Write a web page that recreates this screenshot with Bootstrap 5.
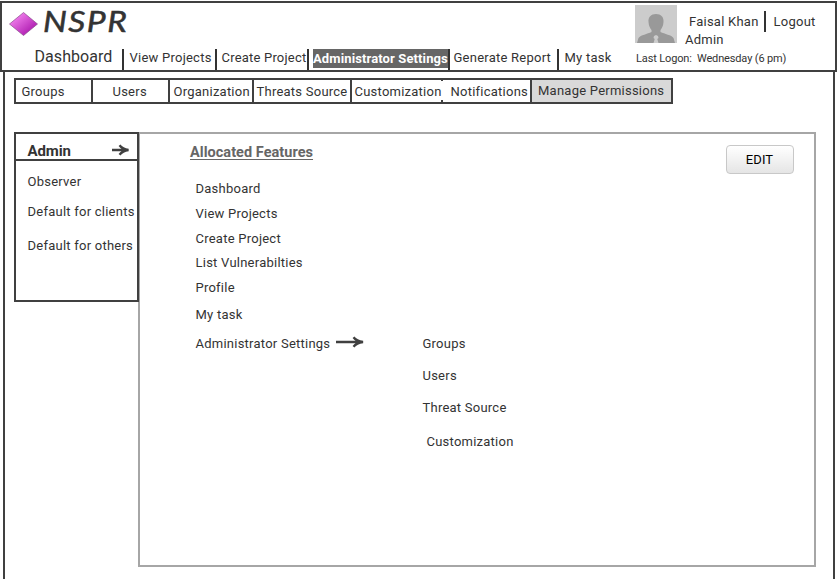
<!DOCTYPE html>
<html lang="en">
<head>
<meta charset="utf-8">
<meta name="viewport" content="width=device-width, initial-scale=1">
<title>NSPR - Manage Permissions</title>
<link href="https://cdn.jsdelivr.net/npm/bootstrap@5.3.0/dist/css/bootstrap.min.css" rel="stylesheet">
<style>
body{font:13px/20px Roboto,"Liberation Sans",sans-serif;letter-spacing:.24px;color:#333;background:#fff;height:579px;overflow:hidden;padding-top:1px}
a{color:inherit;text-decoration:none;white-space:nowrap}
.topbar{height:71px;border:2px solid #404040}
.brand{padding:8px 0 0 7px;height:40px}
.brand-name{font:italic 400 28px/28px Lato,sans-serif;letter-spacing:1.2px;margin-left:4px;margin-top:-4px;-webkit-text-stroke:.5px #333;transform:scaleX(1.2);transform-origin:0 0}
.mainnav{height:26px;padding-left:32.5px}
.mainnav>*{flex:none;white-space:nowrap}
.first{width:87.5px;font-size:16px;letter-spacing:.06px;margin-top:4px}
.item{border-left:2px solid #333;height:21px;padding-left:5.5px;line-height:17px;margin-top:6px}
.item.tight{padding-left:4.5px;letter-spacing:.2px}
.current{border-left:2px solid #333;padding-left:4px;width:141px;height:21px;margin-top:6px}
.current a{display:block;background:#666;color:#fff;font-weight:700;letter-spacing:.12px;line-height:19px;height:19px}
.who{width:200px;padding-top:2px}
.who-info{margin-left:8px}
.logout{border-left:2px solid #333;height:21px;margin:6px 0 0 5px;padding-left:8px;line-height:21px}
.logon{font-size:11px;letter-spacing:-.14px;margin:-1px 0 0 1px;white-space:pre}
.frame{margin:0 2px 0 3px;height:507px;border:solid #404040;border-width:0 2px;padding:6px 17px 0 9px}
.tabs{width:659px;height:26px;border:2px solid #404040}
.tabs>*{flex:none;height:22px;line-height:23.5px}
.tabs>*+*{border-left:2px solid #404040}
.tabs .gap-line{border-left:0;background:linear-gradient(#404040 1px,transparent 1px 20px,#404040 20px) 0 0/2px 100% no-repeat}
.tabs .on{background:#d9d9d9;line-height:21.5px}
.work{margin-top:28px}
.side{width:125px;height:170px;border:2px solid #404040;flex:none;z-index:1}
.side-head{height:27px;border-bottom:2px solid #404040;padding:7px 7px 0 11.5px;font-size:15px;line-height:20px;font-weight:700;letter-spacing:-.1px}
.side a:not(.side-head){display:block;padding-left:11.5px}
.panel{width:678px;height:435px;border:2px solid #a6a6a6;margin-left:-1px;flex:none}
.panel h1{font-size:14.5px;line-height:20px;font-weight:700;color:#666;text-decoration:underline;text-underline-offset:2px;margin:9px 0 0 50px;letter-spacing:.04px}
.feat{padding-left:55.5px;width:282.5px}
.feat div,.sub div{height:20px;white-space:nowrap}
.edit{width:68px;height:29px;margin:11px 20px 0 0;border:1px solid #c8c8c8;border-radius:4px;background:linear-gradient(#fff,#e5e5e5);font-size:13px;line-height:20px;padding:3px 1px 3px 0;color:#000;letter-spacing:.1px}
</style>
</head>
<body>
<header class="topbar d-flex justify-content-between">
  <div>
    <div class="brand d-flex align-items-start">
      <svg width="30" height="26" viewBox="0 0 30 26"><defs><linearGradient id="g" x1="0" y1="0" x2="1" y2="1"><stop offset=".2" stop-color="#ef7bea"/><stop offset=".8" stop-color="#b01fb2"/></linearGradient></defs><path d="M.5 13 14.500 1.500 28.500 13 14.500 24.500Z" fill="url(#g)" stroke="#8a4a8c" stroke-width=".7"/></svg>
      <span class="brand-name">NSPR</span>
    </div>
    <nav class="mainnav d-flex">
      <a href="#" class="first">Dashboard</a>
      <a href="#" class="item" style="width:93px">View Projects</a>
      <a href="#" class="item tight" style="width:92px">Create Project</a>
      <div class="current"><a href="#">Administrator Settings</a></div>
      <a href="#" class="item" style="width:109px;padding-left:3.5px">Generate Report</a>
      <a href="#" class="item">My task</a>
    </nav>
  </div>
  <div class="who">
    <div class="d-flex">
      <svg width="42" height="38" viewBox="0 0 42 38"><path fill="#ccc" d="M0 0h42v38H0z"/><path fill="#999" d="M21 9c5 0 8 3 7.500 8-.3 4-1.500 6-3 8v2c4 2 11 3 13 6l1.500 5H2l1.500-5c2-3 9-4 13-6v-2c-1.500-2-2.700-4-3-8C13 12 16 9 21 9z"/><path fill="#ccc" d="m19 31 2-1 2 1 .5 2-1.200 1 1.200 4h-5l1.200-4-1.200-1z"/></svg>
      <div class="who-info"><div class="ps-1" style="padding-top:7px">Faisal Khan</div><div style="margin-top:-2px">Admin</div></div>
      <a href="#" class="logout">Logout</a>
    </div>
    <div class="logon">Last Logon:  Wednesday (6 pm)</div>
  </div>
</header>
<main class="frame">
  <nav class="tabs d-flex">
    <a href="#" style="width:75px;padding-left:5.5px">Groups</a>
    <a href="#" style="width:77px;padding-left:19.5px">Users</a>
    <a href="#" style="width:84px;padding-left:3.5px">Organization</a>
    <a href="#" style="width:98px;padding-left:2.5px">Threats Source</a>
    <a href="#" style="width:91px;padding-left:2.5px">Customization</a>
    <a href="#" class="gap-line" style="width:89px;padding-left:9.5px">Notifications</a>
    <a href="#" class="on" style="width:141px;padding-left:6px">Manage Permissions</a>
  </nav>
  <div class="work d-flex">
    <aside class="side position-relative">
      <a href="#" class="side-head d-flex justify-content-between"><span>Admin</span>
        <svg width="18" height="12" viewBox="0 0 18 12" style="margin-top:3px" fill="none" stroke="#404040" stroke-width="2.300"><path d="M0 6h15.500M7.500 1.200q3 3.800 9 4.800-6 1-9 4.800"/></svg></a>
      <a href="#" style="margin-top:11px">Observer</a>
      <a href="#" style="margin-top:10px">Default for clients</a>
      <a href="#" style="margin-top:14px">Default for others</a>
    </aside>
    <section class="panel">
      <div class="d-flex justify-content-between">
        <h1>Allocated Features</h1>
        <button class="edit">EDIT</button>
      </div>
      <div class="d-flex">
        <div class="feat">
          <div style="margin-top:5px">Dashboard</div>
          <div style="margin-top:5px">View Projects</div>
          <div style="margin-top:5px">Create Project</div>
          <div style="margin-top:4px">List Vulnerabilties</div>
          <div style="margin-top:5px">Profile</div>
          <div style="margin-top:7px">My task</div>
          <div class="d-flex" style="margin-top:9px"><span style="width:140px">Administrator Settings</span>
            <svg width="29" height="12" viewBox="0 0 29 12" style="margin-top:2px" fill="none" stroke="#404040" stroke-width="2.300"><path d="M0 6h26M17.500 1.200q3 3.800 9.500 4.800-6.500 1-9.500 4.800"/></svg></div>
        </div>
        <div class="sub">
          <div style="margin-top:160px">Groups</div>
          <div style="margin-top:12px">Users</div>
          <div style="margin-top:12px">Threat Source</div>
          <div class="ps-1" style="margin-top:14px">Customization</div>
        </div>
      </div>
    </section>
  </div>
</main>
<script src="https://cdn.jsdelivr.net/npm/bootstrap@5.3.0/dist/js/bootstrap.bundle.min.js"></script>
</body>
</html>
